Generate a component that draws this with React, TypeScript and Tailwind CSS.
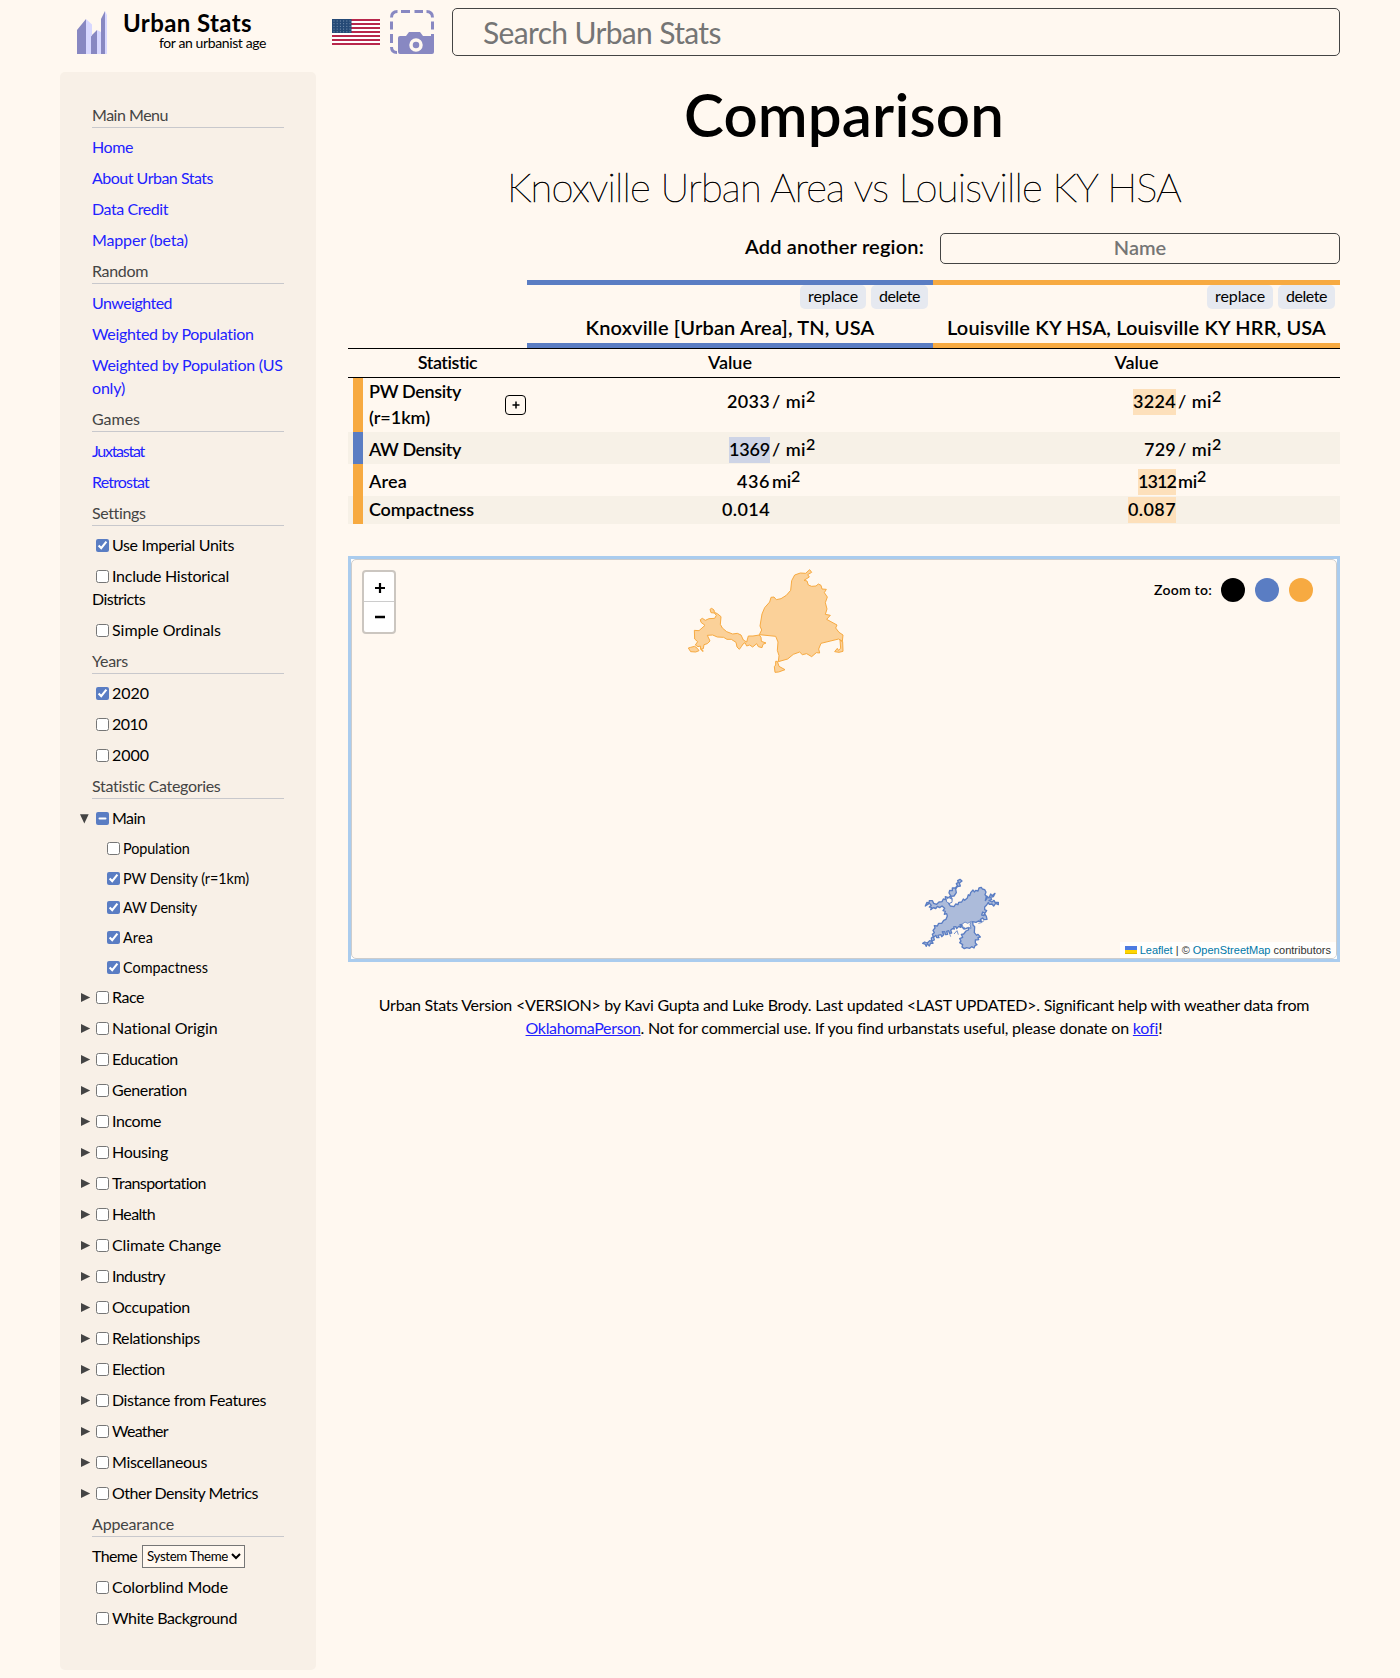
import { useLayoutEffect, useRef, useState, type ReactNode } from "react";

/* Text whose tracking is computed so that it fills the given width. */
function Fit({ w, children, className = "" }: { w: number; children: string; className?: string }) {
  const ref = useRef<HTMLSpanElement>(null);
  const [spacing, setSpacing] = useState(0);
  useLayoutEffect(() => {
    const el = ref.current;
    if (!el) return;
    const natural = el.getBoundingClientRect().width - spacing * children.length;
    setSpacing((w - natural) / children.length);
  }, [w, children]);
  return (
    <span ref={ref} className={`inline-block whitespace-nowrap ${className}`} style={{ letterSpacing: spacing }}>
      {children}
    </span>
  );
}

type Label = [string, number];

function Title({ label }: { label: Label }) {
  return (
    <div className="mb-2 h-6 border-b border-[#c8c8cc] leading-[21px] text-[#444]">
      <Fit w={label[1]}>{label[0]}</Fit>
    </div>
  );
}

function Links({ items }: { items: Label[][] }) {
  return (
    <ul>
      {items.map((lines) => (
        <li key={lines[0][0] + lines.length} className="mb-2 text-[#2222ff]">
          {lines.map(([t, w]) => (
            <a key={t} href="#" className="block h-[23px] leading-[21px]">
              <Fit w={w}>{t}</Fit>
            </a>
          ))}
        </li>
      ))}
    </ul>
  );
}

function Box({ on = false, mixed = false }: { on?: boolean; mixed?: boolean }) {
  return (
    <input
      type="checkbox"
      defaultChecked={on}
      ref={(el) => {
        if (el) el.indeterminate = mixed;
      }}
      className="mr-[3px] ml-1 h-[13px] w-[13px] shrink-0 accent-[#5a7dc3]"
    />
  );
}

function Check({ label, on }: { label: Label; on?: boolean }) {
  return (
    <label className="mb-2 flex h-[23px] items-center">
      <Box on={on} />
      <Fit w={label[1]} className="pb-0.5">{label[0]}</Fit>
    </label>
  );
}

function Category({ label, open = false }: { label: Label; open?: boolean }) {
  return (
    <div className="mb-2 -ml-3 flex h-[23px] items-center">
      <svg viewBox="0 0 12 12" className="h-3 w-3 shrink-0 fill-[#444]">
        {open ? <path d="M0 1.3h8.700L4.300 10.500z" /> : <path d="M1 1.9v9L10.2 6.4z" />}
      </svg>
      <Box mixed={open} />
      <Fit w={label[1]} className="pb-0.5">{label[0]}</Fit>
    </div>
  );
}

function SubCheck({ label, on }: { label: Label; on?: boolean }) {
  return (
    <label className="mb-2 ml-[11px] flex h-[21.6px] items-center text-[14.4px]">
      <Box on={on} />
      <Fit w={label[1]}>{label[0]}</Fit>
    </label>
  );
}

const categories: Label[] = [
  ["Race", 32], ["National Origin", 106], ["Education", 66], ["Generation", 75], ["Income", 49],
  ["Housing", 56], ["Transportation", 94], ["Health", 43], ["Climate Change", 109], ["Industry", 53],
  ["Occupation", 78], ["Relationships", 88], ["Election", 53], ["Distance from Features", 154],
  ["Weather", 56], ["Miscellaneous", 95], ["Other Density Metrics", 146],
];

function Sidebar() {
  return (
    <aside className="h-[1598px] w-64 shrink-0 rounded-[5px] bg-[#f8f0e7] p-8 text-base leading-[23px]">
      <Title label={["Main Menu", 76]} />
      <Links items={[[["Home", 41]], [["About Urban Stats", 121]], [["Data Credit", 76]], [["Mapper (beta)", 96]]]} />
      <Title label={["Random", 56]} />
      <Links
        items={[
          [["Unweighted", 80]],
          [["Weighted by Population", 162]],
          [["Weighted by Population (US", 191], ["only)", 33]],
        ]}
      />
      <Title label={["Games", 48]} />
      <Links items={[[["Juxtastat", 52]], [["Retrostat", 57]]]} />
      <Title label={["Settings", 53]} />
      <Check label={["Use Imperial Units", 122]} on />
      <label className="mb-2 block">
        <span className="flex h-[23px] items-center">
          <Box />
          <Fit w={117} className="pb-0.5">Include Historical</Fit>
        </span>
        <span className="block h-[23px] leading-[21px]">
          <Fit w={53}>Districts</Fit>
        </span>
      </label>
      <Check label={["Simple Ordinals", 109]} />
      <Title label={["Years", 36]} />
      <Check label={["2020", 37]} on />
      <Check label={["2010", 35]} />
      <Check label={["2000", 37]} />
      <Title label={["Statistic Categories", 129]} />
      <Category label={["Main", 33]} open />
      <SubCheck label={["Population", 67]} />
      <SubCheck label={["PW Density (r=1km)", 126]} on />
      <SubCheck label={["AW Density", 74]} on />
      <SubCheck label={["Area", 30]} on />
      <SubCheck label={["Compactness", 85]} on />
      {categories.map((c) => (
        <Category key={c[0]} label={c} />
      ))}
      <Title label={["Appearance", 82]} />
      <div className="mb-2 flex h-[23px] items-center">
        <Fit w={45} className="mr-[5px] pb-0.5">Theme</Fit>
        <select className="h-[23px] w-[103px] border border-[#767676] bg-[#fff8f0] text-[13.3px] tracking-[-0.35px]">
          <option>System Theme</option>
        </select>
      </div>
      <Check label={["Colorblind Mode", 116]} />
      <Check label={["White Background", 125]} />
    </aside>
  );
}

function Header() {
  return (
    <header className="flex h-16 items-start pt-2 pl-[17px]">
      <svg viewBox="0 0 30 43" className="mt-[3px] h-[43px] w-[30px]">
        <path d="M0 19 9 8v35H0zM14 25 20 19v24h-6zM24 8 28 0v43h-4z" fill="#8888c2" />
        <path d="M9 8 15 13.5v11L14 25.500V43H9zM20 19 24 21v22h-4zM28 0 30.500 5v38H28z" fill="#d8d8ff" />
      </svg>
      <div className="ml-4 w-[200px]">
        <div className="h-[27px] text-[24px] leading-[29px] font-bold">
          <Fit w={129}>Urban Stats</Fit>
        </div>
        <div className="pl-9 text-[14px] leading-4">
          <Fit w={107}>for an urbanist age</Fit>
        </div>
      </div>
      <svg viewBox="0 0 48 26" className="mt-[11px] ml-[9px] h-[26px] w-12">
        <rect width="48" height="26" fill="#fff" />
        {[0, 1, 2, 3, 4, 5, 6].map((i) => (
          <rect key={i} y={i * 4} width="48" height="2" fill="#b8274b" />
        ))}
        <rect width="19.500" height="14" fill="#254a76" />
        {[1.5, 4.2, 6.9, 9.6, 12.3].map((y) =>
          [1.5, 4.7, 7.9, 11.1, 14.3, 17.5].map((x) => (
            <rect key={`${x}-${y}`} x={x} y={y} width="1" height="1" fill="#7f97b3" />
          )),
        )}
      </svg>
      <svg viewBox="0 0 44 44" className="mt-0.5 ml-[10px] h-11 w-11" fill="none">
        <g stroke="#8888c2" strokeWidth="3">
          <path d="M1.500 7.500Q1.500 1.500 7.500 1.500M11 1.500h9M24.500 1.500h8.500M36.500 1.500Q42.500 1.500 42.500 7.500M42.500 11.500v8M42.500 24v6M1.500 11.500v8M1.500 24v9M1.500 37Q1.500 42.500 7 42.500" />
        </g>
        <path d="M10 26h6l3-4h11l3 4h9q2 0 2 2v14q0 2-2 2H10q-2 0-2-2V28q0-2 2-2z" fill="#8888c2" />
        <circle cx="26" cy="35" r="5" stroke="#fff8f0" strokeWidth="3.500" />
      </svg>
      <input
        className="ml-[18px] h-12 w-[888px] rounded-[5px] border border-[#444] bg-[#fff8f0] pl-[30px] text-[30px] tracking-[-0.65px] placeholder:text-[#757575]"
        placeholder="Search Urban Stats"
      />
    </header>
  );
}

function Pill({ label }: { label: Label }) {
  return (
    <button className="h-6 rounded-[5px] bg-[#e6e9f0] px-2 text-base leading-[22px] font-normal">
      <Fit w={label[1]} className="pb-0.5">{label[0]}</Fit>
    </button>
  );
}

function RegionHead({ name, frame, width }: { name: Label; frame: string; width: string }) {
  return (
    <div className={`flex h-[68px] flex-col border-y-[5px] ${frame} ${width}`}>
      <div className="flex h-6 justify-end gap-[5px] pr-[5px]">
        <Pill label={["replace", 50]} />
        <Pill label={["delete", 41]} />
      </div>
      <div className="pt-[3px] text-center text-[20px] leading-[30px]">
        <Fit w={name[1]}>{name[0]}</Fit>
      </div>
    </div>
  );
}

function Value({ n, unit, mark = "", width }: { n: Label; unit?: "density" | "area"; mark?: string; width: string }) {
  return (
    <div className={`flex items-center ${width}`}>
      <div className="flex w-[243px] justify-end">
        <span className={`h-[26px] leading-6 ${mark}`}>
          <Fit w={n[1]}>{n[0]}</Fit>
        </span>
      </div>
      <div className="h-[26px] pl-0.5 leading-6">
        {unit && <Fit w={unit === "density" ? 34 : 19}>{unit === "density" ? "/ mi" : "mi"}</Fit>}
        {unit && <sup className="-top-[6px] text-[16px] leading-none">2</sup>}
      </div>
    </div>
  );
}

function Row({ strip, shade = "", h, name, children }: { strip: string; shade?: string; h: string; name: ReactNode; children: ReactNode }) {
  return (
    <div className={`flex pl-[5px] ${h} ${shade}`}>
      <div className={`w-[10px] ${strip}`} />
      <div className="flex w-[164px] items-center justify-between pr-px pl-1.5">{name}</div>
      {children}
    </div>
  );
}

function Table() {
  return (
    <section className="text-[18px] leading-[26px] font-semibold">
      <div className="flex pl-[179px]">
        <RegionHead name={["Knoxville [Urban Area], TN, USA", 289]} frame="border-[#5a7dc3]" width="w-[406px]" />
        <RegionHead name={["Louisville KY HSA, Louisville KY HRR, USA", 379]} frame="border-[#f7aa41]" width="w-[407px]" />
      </div>
      <div className="flex h-[30px] items-center border-y border-black pb-0.5 text-center">
        <div className="w-[179px] pl-5"><Fit w={60}>Statistic</Fit></div>
        <div className="w-[406px]"><Fit w={44}>Value</Fit></div>
        <div className="w-[407px]"><Fit w={44}>Value</Fit></div>
      </div>
      <Row
        h="h-[54px]"
        strip="bg-[#f7aa41]"
        name={
          <>
            <span className="flex flex-col items-start pb-0.5">
              <Fit w={92}>PW Density</Fit>
              <Fit w={61}>(r=1km)</Fit>
            </span>
            <button className="flex h-5 w-[21px] items-center justify-center rounded-[4px] border border-black">
              <svg viewBox="0 0 8 8" className="h-2 w-2 stroke-black" strokeWidth="1.500"><path d="M4 .5v7M.5 4h7" /></svg>
            </button>
          </>
        }
      >
        <Value n={["2033", 43]} unit="density" width="w-[406px] pb-1.5" />
        <Value n={["3224", 43]} unit="density" mark="bg-[#fde0bb]" width="w-[407px] pb-1.5" />
      </Row>
      <Row h="h-8" strip="bg-[#5a7dc3]" shade="bg-[#f7f1e7]" name={<Fit w={92} className="pt-0.5">AW Density</Fit>}>
        <Value n={["1369", 41]} unit="density" mark="bg-[#ced4e6]" width="w-[406px] pt-1" />
        <Value n={["729", 32]} unit="density" width="w-[407px] pt-1" />
      </Row>
      <Row h="h-8" strip="bg-[#f7aa41]" name={<Fit w={38} className="pt-0.5">Area</Fit>}>
        <Value n={["436", 33]} unit="area" width="w-[406px] pt-1" />
        <Value n={["1312", 38]} unit="area" mark="bg-[#fde0bb]" width="w-[407px] pt-1" />
      </Row>
      <Row h="h-7" strip="bg-[#f7aa41]" shade="bg-[#f7f1e7]" name={<Fit w={105} className="pb-0.5">Compactness</Fit>}>
        <Value n={["0.014", 48]} width="w-[406px]" />
        <Value n={["0.087", 48]} mark="bg-[#fde0bb]" width="w-[407px]" />
      </Row>
    </section>
  );
}

function RegionMap() {
  return (
    <section className="relative mt-8 h-[406px] overflow-hidden border-[3px] border-[#aaccee] bg-white">
      <div className="h-full rounded-[5px] border border-[#ccc] bg-[#fff8f0]" />
      <svg viewBox="0 0 570 390" className="absolute top-[-4px] left-[319px] h-[130px] w-[190px]" fill="#f7aa41" fillOpacity="0.5" stroke="#f7aa41" strokeWidth="3" strokeLinejoin="round">
        <path d="M73 226 87 227 96 219 105 211 93 202 91 194 97 190 106 196 117 191 134 190 139 181 133 174 123 173 120 163 125 160 132 165 133 172 142 176 153 185 151 208 157 219 170 230 188 237 202 235 213 240 220 255 230 261 235 243 249 243 268 240 273 247 274 259 288 264 279 268 276 278 265 275 260 266 248 276 239 270 230 273 225 263 219 267 214 275 208 283 201 276 198 262 184 253 171 253 161 247 142 246 128 240 112 241 120 258 112 266 102 269 100 281 92 283 91 273 84 275 76 270 83 260 74 252zM74 274 62 277 55 279 62 290 77 291 87 287 82 280zM93 282l4 7 3-1z" />
        <path d="M268 239 275 225 270 213 276 177 284 158 299 141 303 127 312 126 319 134 333 131 349 121 362 106 365 77 374 60 391 54 407 55 419 44 425 52 413 59 418 66 402 76 411 78 415 90 425 94 438 93 445 87 453 91 456 102 469 103 463 113 472 126 466 143 471 162 466 178 481 181 470 193 501 210 497 219 507 232 519 240 517 259 506 252 453 265 446 282 449 294 439 293 425 305 410 296 397 299 389 291 370 298 353 312 325 320 327 302 322 286 324 261 317 244z" />
        <path d="M317 319 322 319 327 334 345 344 326 351 315 352 313 335 317 330zM510 255 518 260 519 289 507 292 494 290 502 280 505 286 512 280z" />
      </svg>
      <svg viewBox="0 0 258 240" className="absolute top-[315px] left-[567px] h-20 w-[86px]" fill="#5a7dc3" fillOpacity="0.5" stroke="#5a7dc3" strokeWidth="4" strokeLinejoin="round">
        <path d="M126 16 132 21 124 27 127 36 118 38 113 45 115 56 108 66 97 67 102 74 100 84 92 88 97 96 108 98 113 90 120 92 122 85 131 84 136 75 140 79 148 72 151 62 155 65 158 56 165 48 169 54 173 49 180 51 183 42 190 40 193 45 200 47 204 54 201 62 205 68 202 80 207 74 206 66 213 72 218 60 222 65 231 58 226 68 218 70 221 77 213 79 222 84 228 79 231 85 241 85 241 92 233 88 227 96 222 90 214 91 211 85 206 93 200 99 200 107 206 110 201 117 194 114 191 123 198 125 199 118 205 127 207 136 198 137 194 132 187 137 191 143 181 141 174 145 164 143 165 153 170 158 169 176 176 184 180 181 187 189 180 191 182 197 172 198 172 207 177 212 171 215 168 222 161 218 155 223 146 221 139 224 132 219 134 212 125 206 129 201 125 194 134 190 130 181 137 180 144 171 151 168 154 157 147 163 138 165 130 157 133 151 126 152 128 160 122 157 116 164 114 158 107 159 109 165 103 164 98 169 101 177 95 178 92 170 86 172 89 181 83 182 80 173 73 174 77 182 71 188 69 182 60 184 63 191 56 191 54 184 47 190 49 198 42 201 45 208 38 207 34 216 28 209 25 217 21 210 14 208 20 204 28 207 35 200 41 202 40 192 46 188 43 181 49 176 45 169 51 162 49 155 58 156 62 148 71 148 77 139 84 136 88 126 86 119 79 121 82 112 75 110 80 103 72 96 65 101 58 97 53 104 46 101 38 107 41 100 34 99 40 94 35 88 29 91 22 96 27 85 33 87 34 80 43 80 47 88 56 91 63 84 72 83 76 75 83 77 82 68 91 71 98 65 93 57 95 49 103 50 103 42 112 42 118 35 115 29 121 25 119 20z" />
        <path d="M38 107l9-6 8 2M181 148l9-2 8-6M80 181l-8-10M108 180l9-10 4 12M98 188l-5-14" fill="none" strokeWidth="2.500" />
        <path d="M85 76l8-5 9 5 0 9-8 3-8-4zM132 151l9-7 8 4 11-6-4 9 3 12-7-3-10 3-8-5z" fill="#fff8f0" fillOpacity="1" strokeWidth="2.500" />
      </svg>
      <div className="absolute top-[11px] left-[11px] flex h-16 w-[34px] flex-col rounded-[4px] border-2 border-[#cbc6c0] bg-white">
        <button className="flex h-[30px] items-center justify-center border-b border-[#ccc]">
          <svg viewBox="0 0 10 10" className="mt-[2px] ml-px h-[10px] w-[10px] stroke-black" strokeWidth="2.200"><path d="M5 0v10M0 5h10" /></svg>
        </button>
        <button className="flex flex-1 items-center justify-center">
          <svg viewBox="0 0 10 10" className="ml-px h-[10px] w-[10px] stroke-black" strokeWidth="2.500"><path d="M0 5h10" /></svg>
        </button>
      </div>
      <div className="absolute top-[19px] right-6 flex items-center gap-[10px] text-[14px] leading-6 font-semibold">
        <Fit w={58} className="-mr-px">Zoom to:</Fit>
        <span className="h-6 w-6 rounded-full bg-black" />
        <span className="h-6 w-6 rounded-full bg-[#5a7dc3]" />
        <span className="h-6 w-6 rounded-full bg-[#f7aa41]" />
      </div>
      <div className="absolute right-px bottom-px flex h-4 items-center rounded-br-[4px] bg-white/80 px-[5px] font-['Liberation_Sans',sans-serif] text-[11px] whitespace-pre text-[#333]">
        <svg viewBox="0 0 12 8" className="mr-[3px] h-2 w-3"><path fill="#4C7BE1" d="M0 0h12v4H0z" /><path fill="#FFD500" d="M0 4h12v3H0z" /><path fill="#E0BC00" d="M0 7h12v1H0z" /></svg>
        <a href="#" className="text-[#0078a8]">Leaflet</a> | © <a href="#" className="text-[#0078a8]">OpenStreetMap</a> contributors
      </div>
    </section>
  );
}

export default function App() {
  return (
    <div className="min-h-[1678px] bg-[#fff8f0] px-[60px] font-[Lato,sans-serif] text-black">
      <Header />
      <div className="flex gap-8 pt-2">
        <Sidebar />
        <main className="w-[992px]">
          <h1 className="h-[86px] text-center text-[60px] leading-[84px] font-semibold"><Fit w={320}>Comparison</Fit></h1>
          <h2 className="h-[75px] text-center text-[40px] leading-[58px] font-thin [-webkit-text-stroke:0.6px_#000]">
            <Fit w={674}>Knoxville Urban Area vs Louisville KY HSA</Fit>
          </h2>
          <div className="flex h-[47px] items-start justify-end text-[20px] font-semibold">
            <Fit w={179} className="mr-4 leading-[27px]">Add another region:</Fit>
            <input
              className="h-[31px] w-[400px] rounded-[5px] border border-[#444] bg-[#fff8f0] pb-[3px] text-center placeholder:text-[#757575]"
              placeholder="Name"
            />
          </div>
          <Table />
          <RegionMap />
          <footer className="pt-[31px] text-center leading-[23px]">
            <div><Fit w={930}>{"Urban Stats Version <VERSION> by Kavi Gupta and Luke Brody. Last updated <LAST UPDATED>. Significant help with weather data from"}</Fit></div>
            <div className="flex justify-center">
              <a href="#" className="text-[#2222ff]"><Fit w={115} className="underline">OklahomaPerson</Fit></a>
              <Fit w={492} className="whitespace-pre">. Not for commercial use. If you find urbanstats useful, please donate on </Fit>
              <a href="#" className="text-[#2222ff]"><Fit w={25} className="underline">kofi</Fit></a>
              <span>!</span>
            </div>
          </footer>
        </main>
      </div>
    </div>
  );
}
